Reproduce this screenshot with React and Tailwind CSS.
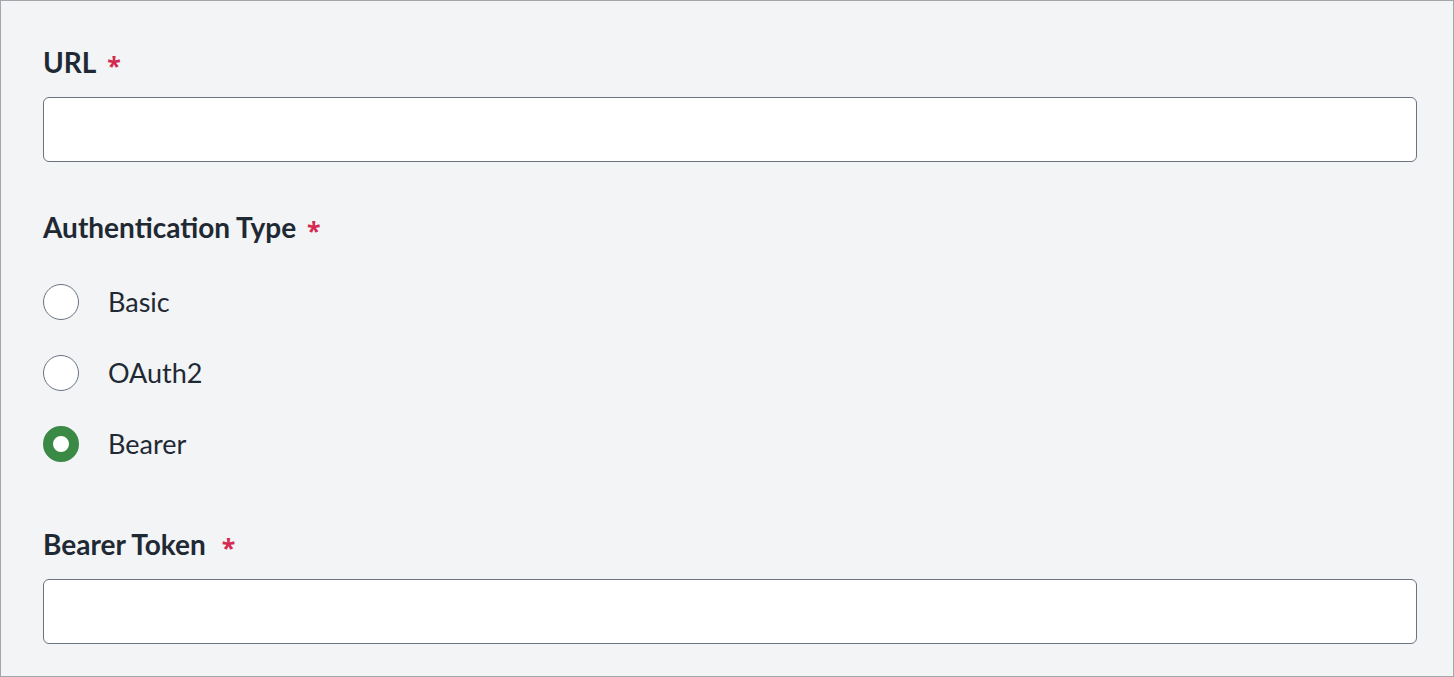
import React, { useState } from "react";

function Label({ children, gap = "ml-[11px]" }) {
  return (
    <div className="flex items-center h-[32px] text-[28px] leading-[32px] font-bold text-[#1f2933]">
      <span>{children}</span>
      <span
        className={`${gap} relative top-[3px] text-[25px] leading-none font-bold text-[#d42a50]`}
        style={{ fontFamily: "'Noto Sans', sans-serif" }}
      >
        *
      </span>
    </div>
  );
}

function Radio({ label, checked, onClick }) {
  return (
    <label className="flex items-center h-[36px] cursor-pointer" onClick={onClick}>
      <span
        className={
          checked
            ? "box-border w-[36px] h-[36px] rounded-full border-[10px] border-[#3a8a45] bg-white"
            : "box-border w-[36px] h-[36px] rounded-full border border-[#6b7280] bg-white"
        }
      />
      <span className="ml-[29px] text-[27px] text-[#1f2933]">{label}</span>
    </label>
  );
}

export default function App() {
  const [auth, setAuth] = useState("bearer");
  const options = [
    { id: "basic", label: "Basic" },
    { id: "oauth2", label: "OAuth2" },
    { id: "bearer", label: "Bearer" },
  ];

  return (
    <div
      className="box-border w-full h-[677px] border border-[#a3a6ab] bg-[#f3f4f6] pl-[42px] pr-[36px] pt-[45px]"
      style={{ fontFamily: "Lato, 'Noto Sans', sans-serif" }}
    >
      {/* URL */}
      <Label>URL</Label>
      <input className="mt-[19px] block w-full h-[65px] box-border rounded-[6px] border border-[#6b7280] bg-white outline-none" />

      {/* Authentication type */}
      <div className="mt-[49px]">
        <Label gap="ml-[11px]">Authentication Type</Label>
      </div>
      <div className="mt-[41px] flex flex-col gap-[35px]">
        {options.map((o) => (
          <Radio key={o.id} label={o.label} checked={auth === o.id} onClick={() => setAuth(o.id)} />
        ))}
      </div>

      {/* Bearer token */}
      <div className="mt-[66px]">
        <Label gap="ml-[16px]">Bearer Token</Label>
      </div>
      <input className="mt-[19px] block w-full h-[65px] box-border rounded-[6px] border border-[#6b7280] bg-white outline-none" />
    </div>
  );
}
